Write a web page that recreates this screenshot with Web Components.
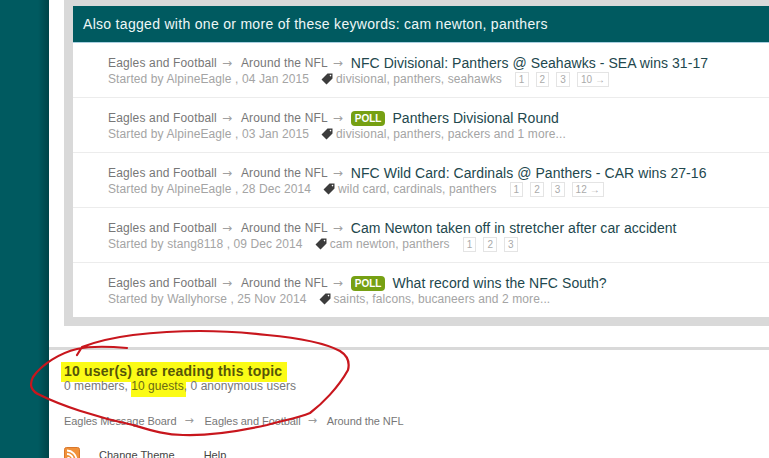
<!DOCTYPE html>
<html>
<head>
<meta charset="utf-8">
<style>
    html, body { margin: 0; height: 100%; }
    body { background: #fff; font-family: "Liberation Sans", Arial, sans-serif; overflow: hidden; }
</style>
</head>
<body>
<forum-page>
    <tag-box title="Also tagged with one or more of these keywords: cam newton, panthers">
        <topic-row title="NFC Divisional: Panthers @ Seahawks - SEA wins 31-17" author="AlpineEagle" date="04 Jan 2015" tags="divisional, panthers, seahawks" pages="1,2,3,10 →"></topic-row>
        <topic-row poll title="Panthers Divisional Round" author="AlpineEagle" date="03 Jan 2015" tags="divisional, panthers, packers and 1 more..."></topic-row>
        <topic-row title="NFC Wild Card: Cardinals @ Panthers - CAR wins 27-16" author="AlpineEagle" date="28 Dec 2014" tags="wild card, cardinals, panthers" pages="1,2,3,12 →"></topic-row>
        <topic-row title="Cam Newton taken off in stretcher after car accident" author="stang8118" date="09 Dec 2014" tags="cam newton, panthers" pages="1,2,3"></topic-row>
        <topic-row poll title="What record wins the NFC South?" author="Wallyhorse" date="25 Nov 2014" tags="saints, falcons, bucaneers and 2 more..."></topic-row>
    </tag-box>
    <readers-box></readers-box>
    <crumb-trail></crumb-trail>
    <page-footer></page-footer>
</forum-page>

<script>
const pageTemplate = document.createElement('template');
pageTemplate.innerHTML = `
    <style>
        :host { display: flex; height: 458px; overflow: hidden; position: relative; }
        .side {
            width: 49px;
            flex: none;
            background: linear-gradient(to right, #005a60 0, #005a60 38px, #004448 100%);
        }
        .main { flex: 1; min-width: 0; }
        .scribble { position: absolute; left: 0; top: 0; pointer-events: none; }
    </style>
    <div class="side"></div>
    <div class="main"><slot></slot></div>
    <svg class="scribble" width="769" height="458" viewBox="0 0 769 458" fill="none">
        <path d="M127 348 C105 346 90 346 77 349 C60 353 42 364 33 377 C29 385 31 391 40 395 C60 405 95 417 133 425 C150 430 165 435 183 435 C210 436 240 431 267 425 C285 420 298 418 310 413 C322 404 338 388 348 370 C350 362 348 356 340 351 C325 343 300 338 267 335 C240 332 220 331 200 331 C175 331 150 333 133 335 C110 338 95 342 82 347 L77 355" stroke="#c8161d" stroke-width="2.2" stroke-linecap="round" stroke-linejoin="round"/>
    </svg>
`;

class ForumPage extends HTMLElement {
    constructor () {
        super();
        this._shadowRoot = this.attachShadow({ mode: 'open' });
        this._shadowRoot.appendChild(pageTemplate.content.cloneNode(true));
    }
}

const boxTemplate = document.createElement('template');
boxTemplate.innerHTML = `
    <style>
        :host { display: block; margin-left: 15px; background: #d9d9d9; padding: 6px 0 9px 9px; }
        .head {
            background: #005a60;
            color: #eef7f7;
            font-size: 14px;
            letter-spacing: .3px;
            height: 36px;
            line-height: 36px;
            padding-left: 10px;
            border-bottom: 1px solid #a9cfe0;
        }
        .rows { background: #fff; }
    </style>
    <div class="head"></div>
    <div class="rows"><slot></slot></div>
`;

class TagBox extends HTMLElement {
    constructor () {
        super();
        this._shadowRoot = this.attachShadow({ mode: 'open' });
        this._shadowRoot.appendChild(boxTemplate.content.cloneNode(true));
        this._shadowRoot.querySelector('.head').textContent = this.getAttribute('title');
    }
}

const rowTemplate = document.createElement('template');
rowTemplate.innerHTML = `
    <style>
        :host { display: block; height: 54px; padding-left: 35px; border-bottom: 1px solid #ececec; }
        :host(:last-child) { border-bottom: none; }
        .top { display: flex; align-items: center; height: 16px; padding-top: 12px; font-size: 12px; letter-spacing: .15px; color: #777; }
        .arrow { font-family: "DejaVu Sans", sans-serif; font-size: 12px; letter-spacing: 0; width: 14px; margin: 0 5px; color: #a0a0a0; }
        .arrow.last { margin-right: 4px; }
        .poll {
            background: #76a013;
            color: #fff;
            font-size: 10px;
            font-weight: bold;
            letter-spacing: 0;
            padding: 0 4px;
            height: 15px;
            line-height: 15px;
            border-radius: 4px;
            margin: 0 7px 0 0;
        }
        .title { font-size: 14px; letter-spacing: .06px; color: #22474d; margin-top: -1px; }
        .meta { display: flex; align-items: center; height: 16px; font-size: 12px; letter-spacing: .1px; color: #a4a4a4; }
        .tag { margin: 0 3px 0 12px; flex: none; }
        .pages { display: flex; gap: 7px; margin-left: 13px; }
        .pages span {
            border: 1px solid #e4e4e4;
            color: #aaa;
            font-size: 10px;
            line-height: 13px;
            padding: 0 3px;
        }
    </style>
    <div class="top">
        <span>Eagles and Football</span><span class="arrow">→</span>
        <span>Around the NFL</span><span class="arrow last">→</span>
        <span class="title"></span>
    </div>
    <div class="meta">
        <span class="by"></span>
        <svg class="tag" width="12" height="12" viewBox="0 0 12 12"><path d="M6.5 .5 H11.5 V5.5 L5.5 11.5 L.5 6.5 Z M9.5 1.8 A.8 .8 0 1 0 9.5 3.4 A.8 .8 0 1 0 9.5 1.8 Z" fill="#3c3c3c" fill-rule="evenodd"/></svg>
        <span class="tags"></span>
        <div class="pages"></div>
    </div>
`;

class TopicRow extends HTMLElement {
    constructor () {
        super();
        this._shadowRoot = this.attachShadow({ mode: 'open' });
        this._shadowRoot.appendChild(rowTemplate.content.cloneNode(true));
        let title = this._shadowRoot.querySelector('.title');
        title.textContent = this.getAttribute('title');
        if (this.hasAttribute('poll')) {
            let badge = document.createElement('span');
            badge.classList.add('poll');
            badge.textContent = 'POLL';
            title.before(badge);
        }
        this._shadowRoot.querySelector('.by').textContent =
            'Started by ' + this.getAttribute('author') + ' , ' + this.getAttribute('date');
        this._shadowRoot.querySelector('.tags').textContent = this.getAttribute('tags');
        let pages = this.getAttribute('pages');
        if (pages) {
            pages.split(',').forEach(item => {
                let span = document.createElement('span');
                span.textContent = item;
                this._shadowRoot.querySelector('.pages').appendChild(span);
            });
        }
    }
}

const readersTemplate = document.createElement('template');
readersTemplate.innerHTML = `
    <style>
        :host { display: block; margin-top: 21px; border-top: 3px solid #d9d9d9; padding: 13px 0 0 15px; color: #777; font-size: 12px; }
        h4 { margin: 0; font-size: 14px; line-height: 16px; color: #555508; letter-spacing: .2px; }
        h4 span { background: #fbfb16; padding: 1px 5px 3px 3px; margin-left: -3px; }
        p { margin: 0; line-height: 15px; letter-spacing: .05px; }
        mark { background: #fbfb16; color: #6a6a14; padding: 0 2px 4px 0; margin-right: -2px; }
    </style>
    <h4><span>10 user(s) are reading this topic</span></h4>
    <p>0 members, <mark>10 guests</mark>, 0 anonymous users</p>
`;

class ReadersBox extends HTMLElement {
    constructor () {
        super();
        this._shadowRoot = this.attachShadow({ mode: 'open' });
        this._shadowRoot.appendChild(readersTemplate.content.cloneNode(true));
    }
}

const crumbTemplate = document.createElement('template');
crumbTemplate.innerHTML = `
    <style>
        :host { display: flex; margin: 20px 0 0 15px; font-size: 11px; letter-spacing: -.06px; line-height: 14px; color: #777; }
        .arrow { font-family: "DejaVu Sans", sans-serif; width: 12px; margin: 0 8px; color: #999; }
        .arrow.last { margin: 0 7px; }
    </style>
    <span>Eagles Message Board</span><span class="arrow">→</span>
    <span>Eagles and Football</span><span class="arrow last">→</span>
    <span>Around the NFL</span>
`;

class CrumbTrail extends HTMLElement {
    constructor () {
        super();
        this._shadowRoot = this.attachShadow({ mode: 'open' });
        this._shadowRoot.appendChild(crumbTemplate.content.cloneNode(true));
    }
}

const footerTemplate = document.createElement('template');
footerTemplate.innerHTML = `
    <style>
        :host { display: flex; align-items: flex-start; margin: 20px 0 0 15px; font-size: 11px; line-height: 14px; color: #444; }
        svg { flex: none; margin-right: 19px; margin-top: -1px; }
        .help { margin-left: 29px; }
    </style>
    <svg width="16" height="16" viewBox="0 0 16 16">
        <rect x=".5" y=".5" width="15" height="15" rx="2" fill="#f0913a" stroke="#d9772a"/>
        <circle cx="4.5" cy="11.5" r="1.6" fill="#fff"/>
        <path d="M3 7 A6 6 0 0 1 9 13 M3 3.5 A9.5 9.5 0 0 1 12.5 13" stroke="#fff" stroke-width="1.8" fill="none"/>
    </svg>
    <span>Change Theme</span><span class="help">Help</span>
`;

class PageFooter extends HTMLElement {
    constructor () {
        super();
        this._shadowRoot = this.attachShadow({ mode: 'open' });
        this._shadowRoot.appendChild(footerTemplate.content.cloneNode(true));
    }
}

customElements.define('forum-page', ForumPage);
customElements.define('tag-box', TagBox);
customElements.define('topic-row', TopicRow);
customElements.define('readers-box', ReadersBox);
customElements.define('crumb-trail', CrumbTrail);
customElements.define('page-footer', PageFooter);
</script>
</body>
</html>
